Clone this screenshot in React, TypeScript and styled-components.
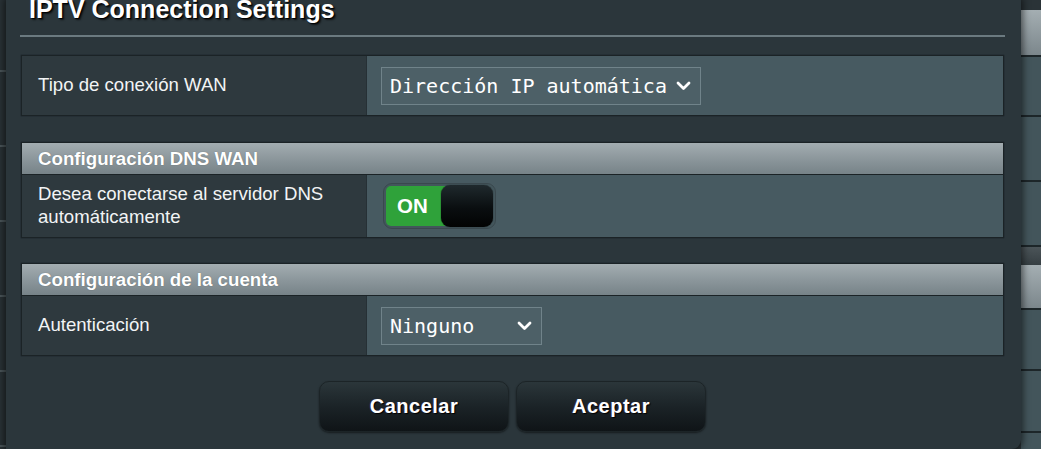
import React from "react";
import styled, { createGlobalStyle, css } from "styled-components";

const GlobalStyle = createGlobalStyle`
  html, body {
    margin: 0;
    padding: 0;
    background: #2a3337;
    overflow: hidden;
  }
  body {
    font-family: "Liberation Sans", Arial, sans-serif;
  }
`;

const Page = styled.div`
  display: flex;
  width: 1041px;
  height: 449px;
  overflow: hidden;
`;

// page behind the dialog, left edge
const LeftEdge = styled.div`
  width: 6px;
  flex-shrink: 0;
  background: repeating-linear-gradient(
    to bottom,
    #293236 0 70px,
    #4b565a 70px 72px,
    #293236 72px 75px
  );
`;

const Modal = styled.div`
  position: relative;
  z-index: 1;
  width: 1015px;
  height: 449px;
  flex-shrink: 0;
  box-sizing: border-box;
  padding: 0 17px 0 15px;
  background: #2b363b;
  border-radius: 0 0 9px 0;
  box-shadow: 0 0 7px 2px rgba(0, 0, 0, 0.55);
  display: flex;
  flex-direction: column;
`;

const Title = styled.h1`
  margin: -3px 0 0 0;
  padding-left: 8px;
  font-size: 25px;
  line-height: 25px;
  font-weight: bold;
  color: #ffffff;
  text-shadow: 1px 1px 1px #000, 2px 2px 2px rgba(0, 0, 0, 0.6);
`;

const Divider = styled.div`
  margin: 13px -1px 0 -1px;
  height: 2px;
  background: #6b7a80;
`;

const Table = styled.div<{ $top: number }>`
  margin-top: ${(p) => p.$top}px;
  border: 1px solid #1b2326;
  box-shadow: 0 0 1px #11171a;
  display: flex;
  flex-direction: column;
`;

const SectionHeader = styled.div`
  height: 31px;
  display: flex;
  align-items: center;
  padding-left: 16px;
  background: linear-gradient(to bottom, #a3adb1 0%, #8a959a 55%, #778388 100%);
  border-bottom: 1px solid #1b2326;
  color: #ffffff;
  font-size: 18.7px;
  font-weight: bold;
  text-shadow: 0 0 1px rgba(0, 0, 0, 0.35);
`;

const Row = styled.div<{ $h: number }>`
  display: grid;
  grid-template-columns: 344px 1fr;
  height: ${(p) => p.$h}px;
`;

const LabelCell = styled.div`
  display: flex;
  align-items: center;
  padding: 0 0 2px 16px;
  background: #2e393e;
  color: #f2f4f5;
  font-size: 18.6px;
  line-height: 23.5px;
`;

const ValueCell = styled.div<{ $pad?: number }>`
  display: flex;
  align-items: center;
  padding-left: ${(p) => p.$pad ?? 14}px;
  background: #475a61;
  border-left: 1px solid #263035;
`;

const SelectBox = styled.div<{ $w: number }>`
  width: ${(p) => p.$w}px;
  height: 38px;
  box-sizing: border-box;
  display: flex;
  align-items: center;
  justify-content: space-between;
  padding: 0 9px 0 8px;
  background: #4d6067;
  border: 1px solid #70838a;
  color: #ffffff;
  font-family: "DejaVu Sans Mono", "Liberation Mono", monospace;
  font-size: 20px;
`;

const Chevron = () => (
  <svg width="15" height="10" viewBox="0 0 15 10">
    <polyline
      points="2,2 7.5,7.5 13,2"
      fill="none"
      stroke="#ffffff"
      strokeWidth="2.8"
      strokeLinecap="round"
      strokeLinejoin="round"
    />
  </svg>
);

const Toggle = styled.div`
  display: flex;
  align-items: center;
  width: 113px;
  height: 46px;
  box-sizing: border-box;
  padding: 2px;
  border-radius: 9px;
  background: #40515770;
  border: 1px solid #3a484e;
`;

const ToggleOn = styled.div`
  width: 60px;
  height: 40px;
  display: flex;
  align-items: center;
  padding-left: 11px;
  box-sizing: border-box;
  background: #2fa23a;
  border-radius: 5px 0 0 5px;
  color: #ffffff;
  font-size: 20.5px;
  font-weight: bold;
`;

const ToggleKnob = styled.div`
  width: 54px;
  height: 42px;
  margin-left: -4px;
  border-radius: 9px;
  background: linear-gradient(to bottom, #1f292d 0%, #0a0e10 55%, #020303 100%);
  box-shadow: 0 0 1px #000;
`;

const Buttons = styled.div`
  margin-top: 25px;
  display: flex;
  justify-content: center;
  gap: 7px;
`;

const Button = styled.button`
  width: 190px;
  height: 51px;
  border-radius: 10px;
  border: 1px solid #1c2427;
  background: linear-gradient(to bottom, #2b363a 0%, #1b2327 50%, #0f1417 100%);
  box-shadow: 0 1px 2px rgba(0, 0, 0, 0.5);
  color: #ffffff;
  font-family: "Liberation Sans", Arial, sans-serif;
  font-size: 20px;
  font-weight: bold;
  letter-spacing: 0.5px;
  text-shadow: 1px 1px 1px #000, -1px 0 1px rgba(80, 60, 160, 0.4);
  cursor: pointer;
`;

// page behind the dialog, right edge
const RightEdge = styled.div`
  flex: 1;
  display: flex;
  flex-direction: column;
`;

const bandKinds = {
  dark: css`
    background: #2a3337;
  `,
  head: css`
    background: linear-gradient(to bottom, #a4aeb2, #7c878c);
    border-bottom: 2px solid #1d2629;
  `,
  row: css`
    background: #43555b;
    border-bottom: 2px solid #1d2629;
  `,
  gap: css`
    background: linear-gradient(to bottom, #4b5458, #363f43);
  `,
};

const Band = styled.div<{ $h: number; $kind: keyof typeof bandKinds }>`
  height: ${(p) => p.$h}px;
  flex-shrink: 0;
  box-sizing: border-box;
  ${(p) => bandKinds[p.$kind]}
`;

const bands: { h: number; kind: keyof typeof bandKinds }[] = [
  { h: 10, kind: "dark" },
  { h: 47, kind: "head" },
  { h: 60, kind: "row" },
  { h: 65, kind: "row" },
  { h: 65, kind: "row" },
  { h: 18, kind: "gap" },
  { h: 45, kind: "head" },
  { h: 61, kind: "row" },
  { h: 62, kind: "row" },
  { h: 30, kind: "row" },
];

export default function App() {
  return (
    <>
      <GlobalStyle />
      <Page>
        <LeftEdge />
        <Modal>
          <Title>IPTV Connection Settings</Title>
          <Divider />

          <Table $top={18}>
            <Row $h={59}>
              <LabelCell>Tipo de conexión WAN</LabelCell>
              <ValueCell>
                <SelectBox $w={320}>
                  <span>Dirección IP automática</span>
                  <Chevron />
                </SelectBox>
              </ValueCell>
            </Row>
          </Table>

          <Table $top={26}>
            <SectionHeader>Configuración DNS WAN</SectionHeader>
            <Row $h={62}>
              <LabelCell>
                Desea conectarse al servidor DNS
                <br />
                automáticamente
              </LabelCell>
              <ValueCell $pad={16}>
                <Toggle>
                  <ToggleOn>ON</ToggleOn>
                  <ToggleKnob />
                </Toggle>
              </ValueCell>
            </Row>
          </Table>

          <Table $top={25}>
            <SectionHeader>Configuración de la cuenta</SectionHeader>
            <Row $h={59}>
              <LabelCell>Autenticación</LabelCell>
              <ValueCell>
                <SelectBox $w={161}>
                  <span>Ninguno</span>
                  <Chevron />
                </SelectBox>
              </ValueCell>
            </Row>
          </Table>

          <Buttons>
            <Button>Cancelar</Button>
            <Button>Aceptar</Button>
          </Buttons>
        </Modal>
        <RightEdge>
          {bands.map((b, i) => (
            <Band key={i} $h={b.h} $kind={b.kind} />
          ))}
        </RightEdge>
      </Page>
    </>
  );
}
